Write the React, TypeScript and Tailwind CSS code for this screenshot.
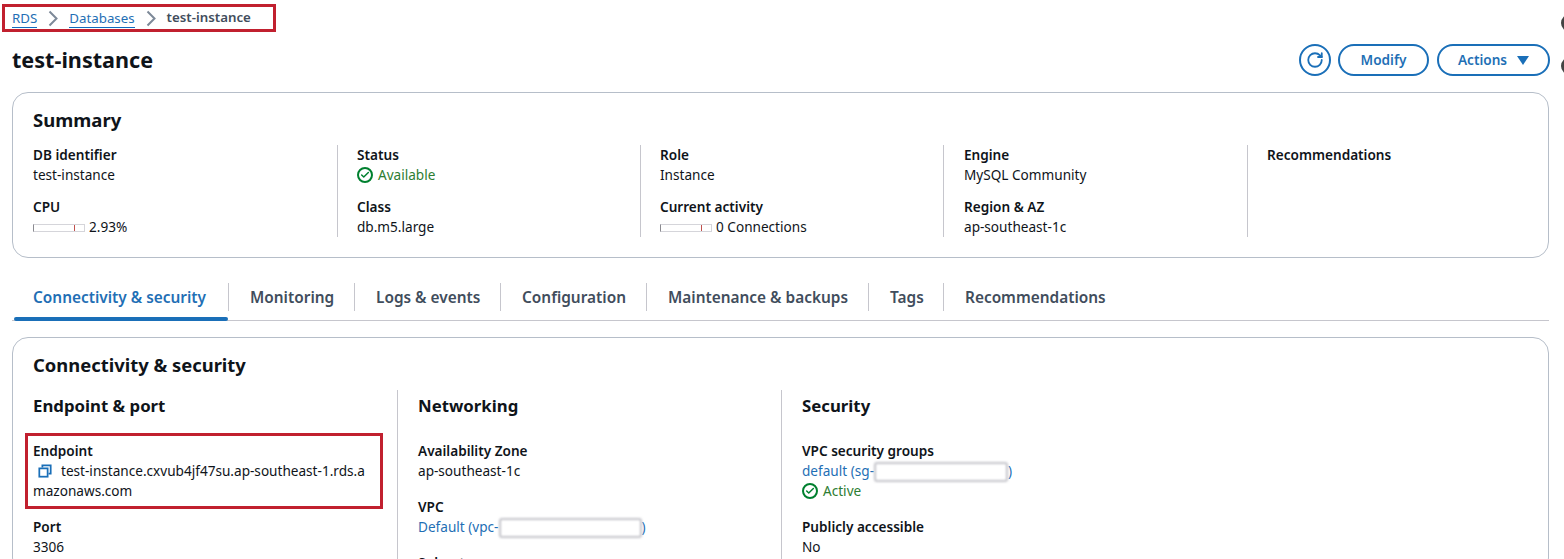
import { Check, RotateCw } from "lucide-react"

function Label({ children }: { children: React.ReactNode }) {
  return <div className="text-[13.6px] leading-5 font-semibold text-[#0f141a]">{children}</div>
}

function Value({ children }: { children: React.ReactNode }) {
  return <div className="text-[13.6px] leading-5 text-[#0f141a]">{children}</div>
}

function StatusOk({ text }: { text: string }) {
  return (
    <div className="flex items-center gap-[5px] text-[13.6px] leading-5 text-[#2d7d32]">
      <span className="flex h-4 w-4 items-center justify-center rounded-full border-2 border-[#00802f]">
        <Check className="h-2.5 w-2.5 text-[#00802f]" strokeWidth={3.5} />
      </span>
      {text}
    </div>
  )
}

function Meter({ mark }: { mark: number }) {
  return (
    <span className="relative mr-[4px] inline-block h-2 w-[52px] border border-[#d5d5da] border-l-[#8a8a90]">
      <span className="absolute top-0 bottom-0 w-px bg-[#c0504d]" style={{ left: mark }} />
    </span>
  )
}

function Blurred({ w }: { w: string }) {
  return <span className={"-my-1 inline-block h-[20px] align-middle rounded-[3px] border-2 border-[#c4c4ca] bg-white blur-[1px] " + w} />
}

function Crumb() {
  return (
    <svg viewBox="0 0 10 17" className="mx-[11px] h-[17px] w-[10px] fill-none stroke-[#7d8998] stroke-2">
      <path d="M1.5 1.5L8.5 8.5L1.5 15.5" />
    </svg>
  )
}

const tabs = [
  { name: "Connectivity & security", w: "w-[216px]", active: true },
  { name: "Monitoring", w: "w-[126px]" },
  { name: "Logs & events", w: "w-[146px]" },
  { name: "Configuration", w: "w-[146px]" },
  { name: "Maintenance & backups", w: "w-[222px]" },
  { name: "Tags", w: "w-[75px]" },
  { name: "Recommendations", w: "w-[180px]", last: true },
]

export default function App() {
  return (
    <div className="relative h-[559px] w-[1564px] overflow-hidden bg-white font-['Noto_Sans','Open_Sans',sans-serif]">
      {/* stray marks at the window edge */}
      <div className="absolute top-[14px] left-[1561px] h-[18px] w-[18px] rounded-full border-[3px] border-[#444]" />
      <div className="absolute top-[57px] left-[1561px] h-[18px] w-[18px] rounded-full border-[3px] border-[#444]" />

      <div className="pt-1 pl-[2px]">
        <div className="flex h-[28px] w-[274px] items-center border-[3px] border-[#c1202f] pl-[7px] text-[13.3px]">
          <a className="border-b border-[#0f6bc0] leading-[18px] text-[#1f6fb5]">RDS</a>
          <Crumb />
          <a className="border-b border-[#0f6bc0] leading-[18px] text-[#1f6fb5]">Databases</a>
          <Crumb />
          <span className="font-semibold text-[#414d5c]">test-instance</span>
        </div>
      </div>

      <div className="flex items-center justify-between pt-[12px] pr-[14px] pl-3">
        <h1 className="text-[21.6px] leading-[32px] font-bold text-[#0f141a]">test-instance</h1>
        <div className="flex items-center">
          <button className="flex h-8 w-8 items-center justify-center rounded-full border-2 border-[#1a6fb8]">
            <RotateCw className="h-[18px] w-[18px] text-[#1a6fb8]" strokeWidth={2.4} />
          </button>
          <button className="ml-[7px] h-8 w-[91px] rounded-full border-2 border-[#1a6fb8] text-[13.6px] font-semibold text-[#1f6fb5]">Modify</button>
          <button className="ml-2 flex h-8 w-[113px] items-center justify-center gap-[10px] rounded-full border-2 border-[#1a6fb8] text-[13.6px] font-semibold text-[#1f6fb5]">
            Actions
            <svg viewBox="0 0 12 9" className="h-[9px] w-[12px] fill-[#1a6fb8]"><path d="M0 0h12L6 9z" /></svg>
          </button>
        </div>
      </div>

      <div className="mt-[16px] mr-[15px] ml-3 h-[166px] rounded-2xl border border-[#b6bec9] pt-[15px] pl-5">
        <h2 className="text-[18.5px] leading-6 font-bold text-[#0f141a]">Summary</h2>
        <div className="mt-[13px] grid grid-cols-[304px_303px_303px_304px_1fr]">
          <div className="space-y-3">
            <div><Label>DB identifier</Label><Value>test-instance</Value></div>
            <div><Label>CPU</Label><Value><Meter mark={40} />2.93%</Value></div>
          </div>
          <div className="space-y-3 border-l border-[#c6c6cd] pl-[19px]">
            <div><Label>Status</Label><StatusOk text="Available" /></div>
            <div><Label>Class</Label><Value>db.m5.large</Value></div>
          </div>
          <div className="space-y-3 border-l border-[#c6c6cd] pl-[19px]">
            <div><Label>Role</Label><Value>Instance</Value></div>
            <div><Label>Current activity</Label><Value><Meter mark={40} />0 Connections</Value></div>
          </div>
          <div className="space-y-3 border-l border-[#c6c6cd] pl-5">
            <div><Label>Engine</Label><Value>MySQL Community</Value></div>
            <div><Label>Region &amp; AZ</Label><Value>ap-southeast-1c</Value></div>
          </div>
          <div className="border-l border-[#c6c6cd] pl-[19px]">
            <Label>Recommendations</Label>
          </div>
        </div>
      </div>

      <div className="mt-[20px] mr-[15px] ml-3 flex h-[43px] items-start border-b border-[#c6c6cd] pl-[1px]">
        {tabs.map((t) => (
          <div key={t.name} className={"relative mt-[5px] flex h-[38px] items-start " + t.w}>
            <div className={"flex h-7 w-full items-center pt-[2px] pl-[20px] text-[15.4px] font-semibold " + (t.active ? "text-[#1f6fb5]" : "text-[#414d5c]") + (t.last ? "" : " border-r border-[#c6c6cd]")}>
              <span className={t.active ? "pl-0" : "pl-[1px]"}>{t.name}</span>
            </div>
            {t.active && <div className="absolute right-px bottom-0 left-px h-1 rounded-full bg-[#1a6fb8]" />}
          </div>
        ))}
      </div>

      <div className="mt-[16px] mr-[15px] ml-3 rounded-2xl border border-[#b6bec9] pt-[15px] pl-5">
        <h2 className="text-[18.4px] leading-6 font-bold text-[#0f141a]">Connectivity &amp; security</h2>
        <div className="mt-[13px] grid grid-cols-[364px_384px_1fr]">
          <div>
            <h3 className="pt-px text-[16.8px] leading-[30px] font-bold text-[#0f141a]">Endpoint &amp; port</h3>
            <div className="mt-3 -ml-2 h-[76px] w-[358px] border-[3px] border-[#c1202f] pt-[5px] pl-[5px]">
              <Label>Endpoint</Label>
              <div className="w-[334px] text-[13.6px] leading-5 break-all text-[#0f141a]">
                <svg viewBox="0 0 16 16" className="mr-[9px] ml-[5px] inline-block h-[14px] w-[14px] -translate-y-[1px] fill-none stroke-[#1a6fb8] stroke-2">
                  <path d="M5 4V1.5h9.5V11H12" />
                  <rect x="1.5" y="5" width="9.5" height="9.5" />
                </svg>
                test-instance.cxvub4jf47su.ap-southeast-1.rds.amazonaws.com
              </div>
            </div>
            <div className="mt-2"><Label>Port</Label><Value>3306</Value></div>
          </div>
          <div className="border-l border-[#c6c6cd] pl-5">
            <h3 className="pt-px text-[16.8px] leading-[30px] font-bold text-[#0f141a]">Networking</h3>
            <div className="mt-5"><Label>Availability Zone</Label><Value>ap-southeast-1c</Value></div>
            <div className="mt-4">
              <Label>VPC</Label>
              <div className="text-[13.6px] leading-5 text-[#1f6fb5]">Default (vpc-<Blurred w="w-[143px]" />)</div>
            </div>
            <div className="mt-4"><Label>Subnets</Label></div>
          </div>
          <div className="border-l border-[#c6c6cd] pl-5">
            <h3 className="pt-px text-[16.8px] leading-[30px] font-bold text-[#0f141a]">Security</h3>
            <div className="mt-5">
              <Label>VPC security groups</Label>
              <div className="text-[13.6px] leading-5 text-[#1f6fb5]">default (sg-<Blurred w="w-[134px]" />)</div>
              <StatusOk text="Active" />
            </div>
            <div className="mt-4"><Label>Publicly accessible</Label><Value>No</Value></div>
          </div>
        </div>
      </div>
    </div>
  )
}
